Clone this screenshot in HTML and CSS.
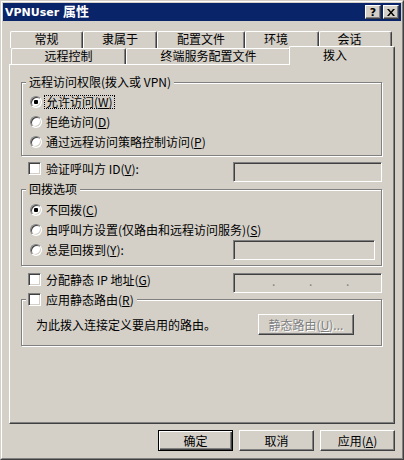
FILE: index.html
```html
<!DOCTYPE html>
<html lang="zh-CN">

<head>
    <meta charset="UTF-8">
    <title>VPNUser 属性</title>
    <link rel="stylesheet" href="styles.css">
</head>

<body>
    <div class="window">
        <div class="frame">
            <div class="titlebar">
                <span class="title">VPNUser <span class="title-cjk">属性</span></span>
                <div class="caption-buttons">
                    <div class="caption-btn">?</div>
                    <div class="caption-btn">
                        <svg width="8" height="7" viewBox="0 0 8 7">
                            <path d="M0 0h2l2 2.4L6 0h2L5 3.5 8 7H6L4 4.6 2 7H0l3-3.5z" fill="#000" />
                        </svg>
                    </div>
                </div>
            </div>

            <div class="content">
                <div class="tab-row tab-row-back">
                    <div class="tab tab-general">常规</div>
                    <div class="tab tab-member">隶属于</div>
                    <div class="tab tab-profile">配置文件</div>
                    <div class="tab tab-env">环境</div>
                    <div class="tab tab-session">会话</div>
                </div>
                <div class="tab-row tab-row-front">
                    <div class="tab tab-remote">远程控制</div>
                    <div class="tab tab-terminal">终端服务配置文件</div>
                    <div class="tab tab-dialin active">拨入</div>
                </div>

                <div class="panel">
                    <div class="group">
                        <div class="group-title">远程访问权限(拨入或 VPN)</div>
                        <div class="radio-list">
                            <div class="radio-row">
                                <span class="radio checked"></span>
                                <span class="label focused">允许访问(<u>W</u>)</span>
                            </div>
                            <div class="radio-row">
                                <span class="radio"></span>
                                <span class="label">拒绝访问(<u>D</u>)</span>
                            </div>
                            <div class="radio-row">
                                <span class="radio"></span>
                                <span class="label">通过远程访问策略控制访问(<u>P</u>)</span>
                            </div>
                        </div>
                    </div>

                    <div class="field-row row-verify">
                        <div class="check-item">
                            <span class="checkbox"></span>
                            <span class="label">验证呼叫方 ID(<u>V</u>):</span>
                        </div>
                        <div class="field"></div>
                    </div>

                    <div class="group group-callback">
                        <div class="group-title">回拨选项</div>
                        <div class="radio-list">
                            <div class="radio-row">
                                <span class="radio checked"></span>
                                <span class="label">不回拨(<u>C</u>)</span>
                            </div>
                            <div class="radio-row">
                                <span class="radio"></span>
                                <span class="label">由呼叫方设置(仅路由和远程访问服务)(<u>S</u>)</span>
                            </div>
                            <div class="radio-row">
                                <span class="radio"></span>
                                <span class="label">总是回拨到(<u>Y</u>):</span>
                                <div class="field field-short"></div>
                            </div>
                        </div>
                    </div>

                    <div class="field-row row-ip">
                        <div class="check-item">
                            <span class="checkbox"></span>
                            <span class="label">分配静态 IP 地址(<u>G</u>)</span>
                        </div>
                        <div class="field field-ip">
                            <span class="ip-dot">.</span>
                            <span class="ip-dot">.</span>
                            <span class="ip-dot">.</span>
                        </div>
                    </div>

                    <div class="group group-routes">
                        <div class="group-title check-item">
                            <span class="checkbox"></span>
                            <span class="label">应用静态路由(<u>R</u>)</span>
                        </div>
                        <div class="routes-row">
                            <span class="label">为此拨入连接定义要启用的路由。</span>
                            <div class="btn btn-disabled">静态路由(<u>U</u>)...</div>
                        </div>
                    </div>
                </div>

                <div class="dialog-buttons">
                    <div class="btn btn-default">确定</div>
                    <div class="btn">取消</div>
                    <div class="btn">应用(<u>A</u>)</div>
                </div>
            </div>
        </div>
    </div>
</body>

</html>
```

FILE: styles.css
```css
* {
    box-sizing: border-box;
}

body {
    margin: 0;
    background-color: #d4d0c8;
    font-family: "Noto Sans CJK SC", sans-serif;
    font-size: 12px;
    line-height: 12px;
    color: #000;
}

/* window frame */
.window {
    width: 404px;
    height: 460px;
    border: 1px solid;
    border-color: #d4d0c8 #404040 #404040 #d4d0c8;
    background-color: #d4d0c8;
}

.frame {
    height: 100%;
    border: 1px solid;
    border-color: #fff #808080 #808080 #fff;
    padding: 1px;
    display: flex;
    flex-direction: column;
}

.titlebar {
    height: 18px;
    flex: none;
    background-color: #0a246a;
    color: #fff;
    display: flex;
    align-items: center;
    justify-content: space-between;
    padding: 0 2px 0 2px;
}

.title {
    font-family: "DejaVu Sans", "Noto Sans CJK SC", sans-serif;
    font-weight: bold;
    font-size: 11px;
    line-height: 12px;
}

.title-cjk {
    font-family: "Noto Sans CJK SC", sans-serif;
    font-size: 13px;
}

.caption-buttons {
    display: flex;
    gap: 2px;
}

.caption-btn {
    width: 16px;
    height: 14px;
    background-color: #d4d0c8;
    border: 1px solid;
    border-color: #fff #404040 #404040 #fff;
    box-shadow: inset -1px -1px 0 #808080;
    display: flex;
    align-items: center;
    justify-content: center;
    color: #000;
    font-family: "DejaVu Sans", sans-serif;
    font-weight: bold;
    font-size: 11px;
    line-height: 11px;
}

.caption-btn svg {
    display: block;
}

/* dialog body */
.content {
    flex: 1;
    padding: 10px 6px 6px 6px;
    display: flex;
    flex-direction: column;
}

/* tabs */
.tab-row {
    display: flex;
    align-items: flex-start;
}

.tab-row-back {
    height: 17px;
    margin-left: 1px;
}

.tab-row-front {
    height: 16px;
    margin-left: 2px;
}

.tab {
    height: 100%;
    flex: none;
    border: 1px solid;
    border-bottom: none;
    border-color: #fff #404040 #fff #fff;
    border-radius: 2px 2px 0 0;
    box-shadow: inset -1px 0 0 #808080;
    background-color: #d4d0c8;
    display: flex;
    align-items: center;
    justify-content: center;
    padding-bottom: 2px;
}

.tab-row-front .tab {
    padding-bottom: 1px;
}

.tab-general { width: 73px; }
.tab-member { width: 74px; }
.tab-profile { width: 88px; }
.tab-env { width: 74px; padding-right: 12px; }
.tab-session { width: 73px; padding-right: 12px; }

.tab-remote { width: 115px; }
.tab-terminal { width: 165px; }

.tab.active {
    width: 106px;
    height: 19px;
    margin: -2px 0 -1px -2px;
    padding: 0 14px 2px 0;
    position: relative;
    z-index: 1;
}

/* tab page */
.panel {
    height: 360px;
    flex: none;
    border: 1px solid;
    border-color: #fff #404040 #404040 #fff;
    box-shadow: inset -1px -1px 0 #808080;
    padding: 17px 12px 0 11px;
}

.group {
    border: 1px solid #808080;
    box-shadow: 1px 1px 0 #fff, inset 1px 1px 0 #fff;
    padding: 0 6px 3px 8px;
}

.group-title {
    width: fit-content;
    height: 12px;
    margin: -7px 0 0 -4px;
    padding: 0 3px;
    background-color: #d4d0c8;
}

.radio-list {
    margin-top: 4px;
}

.radio-row {
    height: 20px;
    display: flex;
    align-items: center;
}

.radio {
    width: 12px;
    height: 12px;
    flex: none;
    border-radius: 50%;
    border: 1px solid;
    border-color: #808080 #fff #fff #808080;
    box-shadow: inset 1px 1px 0 #404040, inset -1px -1px 0 #d4d0c8;
    background-color: #fff;
    margin-right: 4px;
}

.radio.checked::after {
    content: "";
    display: block;
    width: 4px;
    height: 4px;
    margin: 3px;
    border-radius: 1px;
    background-color: #000;
}

.label {
    white-space: nowrap;
}

.focused {
    outline: 1px dotted #000;
    outline-offset: 0;
    padding: 0 1px;
    margin-left: -1px;
}

.checkbox {
    width: 13px;
    height: 13px;
    flex: none;
    border: 1px solid;
    border-color: #808080 #fff #fff #808080;
    box-shadow: inset 1px 1px 0 #404040, inset -1px -1px 0 #d4d0c8;
    background-color: #fff;
    margin-right: 5px;
}

.check-item {
    display: flex;
    align-items: center;
    height: 13px;
}

.field-row {
    display: flex;
    justify-content: space-between;
    align-items: flex-start;
    padding-left: 7px;
}

.row-verify {
    margin-top: 6px;
}

.row-ip {
    margin-top: 7px;
}

.field {
    width: 149px;
    height: 20px;
    flex: none;
    border: 1px solid;
    border-color: #808080 #fff #fff #808080;
    box-shadow: inset 1px 1px 0 #404040, inset -1px -1px 0 #d4d0c8;
    background-color: #d4d0c8;
}

.field-short {
    width: 142px;
    margin-left: auto;
}

.field-ip {
    display: flex;
    gap: 33px;
    padding: 0 0 0 38px;
    color: #808080;
    line-height: 14px;
}

.ip-dot {
    width: 4px;
}

.group-callback {
    margin-top: 7px;
    padding-bottom: 5px;
}

.group-callback .radio-list {
    margin-top: 5px;
}

.group-routes {
    margin-top: 6px;
    padding-bottom: 10px;
}

.group-routes .group-title {
    height: 13px;
    padding: 0 3px 0 2px;
}

.routes-row {
    margin-top: 8px;
    padding-left: 6px;
    display: flex;
    align-items: center;
}

/* push buttons */
.btn {
    width: 75px;
    height: 21px;
    flex: none;
    border: 1px solid;
    border-color: #fff #404040 #404040 #fff;
    box-shadow: inset -1px -1px 0 #808080;
    background-color: #d4d0c8;
    display: flex;
    align-items: center;
    justify-content: center;
    white-space: nowrap;
}

.btn-default {
    border-color: #000;
    box-shadow: inset 1px 1px 0 #fff, inset -1px -1px 0 #404040, inset -2px -2px 0 #808080;
}

.btn-disabled {
    width: 96px;
    margin: 0 21px 0 auto;
    color: #808080;
    text-shadow: 1px 1px 0 #fff;
}

.dialog-buttons {
    margin-top: 6px;
    display: flex;
    justify-content: flex-end;
    gap: 6px;
}
```
